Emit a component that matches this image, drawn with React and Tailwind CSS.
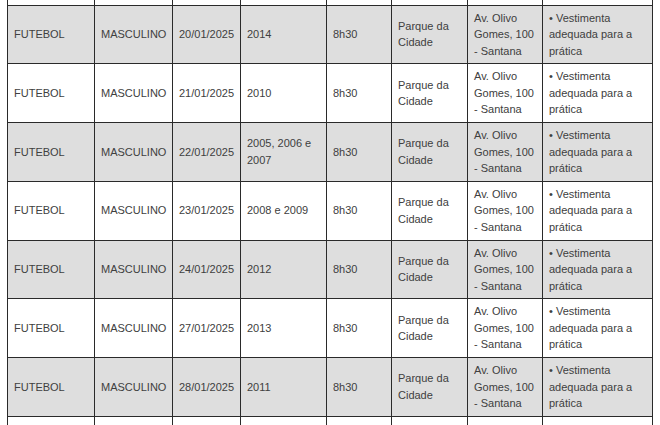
import React from 'react';

const rows = [
  { date: '20/01/2025', year: '2014' },
  { date: '21/01/2025', year: '2010' },
  { date: '22/01/2025', year: '2005, 2006 e 2007' },
  { date: '23/01/2025', year: '2008 e 2009' },
  { date: '24/01/2025', year: '2012' },
  { date: '27/01/2025', year: '2013' },
  { date: '28/01/2025', year: '2011' },
];

const widths = ['w-[87px]', 'w-[78px]', 'w-[68px]', 'w-[86px]', 'w-[65px]', 'w-[76px]', 'w-[75px]', 'w-[110px]'];

const cell = 'border border-[#2a2a2a] px-[6px] py-0 align-middle text-left font-normal';

const App = () => {
  return (
    <div className="w-[660px] h-[425px] overflow-hidden bg-white pl-[7px]" style={{ fontFamily: '"Liberation Sans", Arial, sans-serif' }}>
      <table className="table-fixed border-collapse text-[11px] leading-[16.5px] text-[#404040] w-[646px]">
        <colgroup>
          {widths.map((w, i) => (
            <col key={i} className={w} />
          ))}
        </colgroup>
        <tbody>
          <tr className="h-[5px]">
            {widths.map((_, i) => (
              <td key={i} className="border-x border-b border-[#2a2a2a] p-0 border-t-0" />
            ))}
          </tr>
          {rows.map((r, i) => (
            <tr key={r.date} className={`h-[58.75px] ${i % 2 === 0 ? 'bg-[#dedede]' : 'bg-white'}`}>
              <td className={cell}>FUTEBOL</td>
              <td className={cell}>MASCULINO</td>
              <td className={cell}>{r.date}</td>
              <td className={cell}>{r.year}</td>
              <td className={cell}>8h30</td>
              <td className={cell}>Parque da Cidade</td>
              <td className={cell}>Av. Olivo Gomes, 100 - Santana</td>
              <td className={cell}>• Vestimenta adequada para a prática</td>
            </tr>
          ))}
          <tr className="h-[40px] bg-white">
            {widths.map((_, i) => (
              <td key={i} className={cell} />
            ))}
          </tr>
        </tbody>
      </table>
    </div>
  );
};

export default App;
